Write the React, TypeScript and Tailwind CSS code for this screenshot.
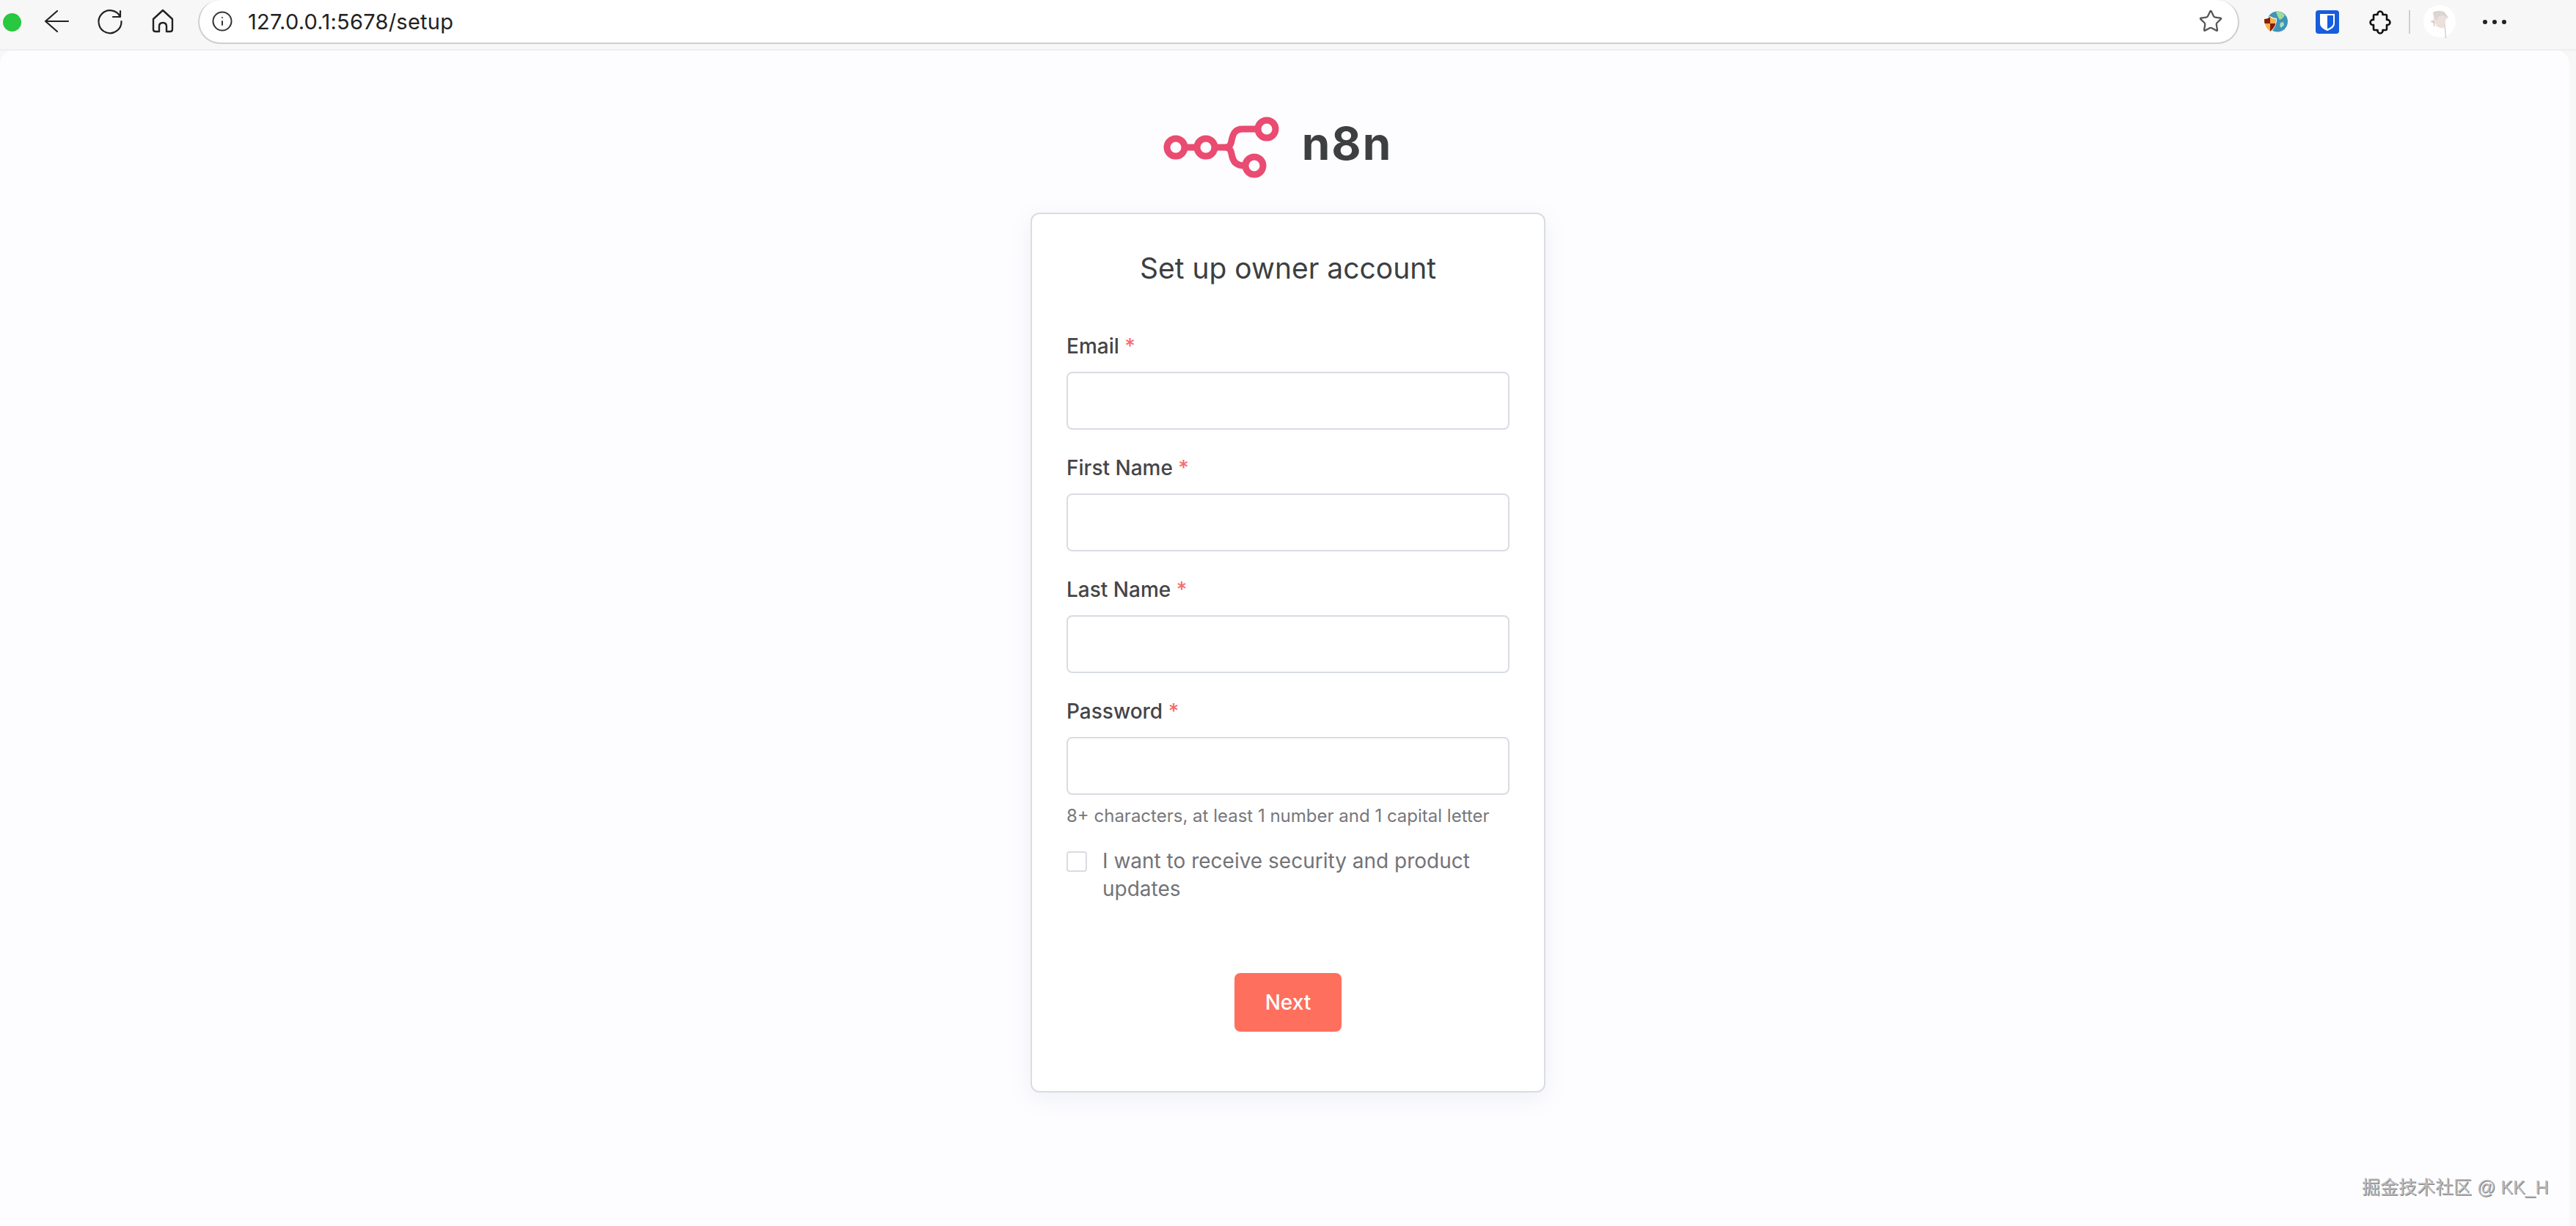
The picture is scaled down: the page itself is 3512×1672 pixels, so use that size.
import React from 'react';
import { Info, Star } from 'lucide-react';

const fields = [
  { label: 'Email' },
  { label: 'First Name' },
  { label: 'Last Name' },
  { label: 'Password', hint: '8+ characters, at least 1 number and 1 capital letter' },
];

const BackIcon: React.FC = () => (
  <svg width="40" height="40" viewBox="0 0 40 40" fill="none" stroke="#222" strokeWidth="2.2" strokeLinecap="round" strokeLinejoin="round">
    <path d="M4 19H35M20 5L4 19L20 33" />
  </svg>
);

const ReloadIcon: React.FC = () => (
  <svg width="40" height="40" viewBox="0 0 40 40" fill="none" stroke="#222" strokeWidth="2.2" strokeLinecap="round" strokeLinejoin="round">
    <path d="M35.5 19A15.5 15.5 0 1 1 34 13M34 5V13H24" />
  </svg>
);

const HomeIcon: React.FC = () => (
  <svg width="36" height="40" viewBox="0 0 36 40" fill="none" stroke="#222" strokeWidth="2.4" strokeLinecap="round" strokeLinejoin="round">
    <path d="M18 4L5 16V30c0 2 1 3 3 3h5V26c0-3 2-5 5-5s5 2 5 5v7h5c2 0 3-1 3-3V16z" />
  </svg>
);

const ShieldGlobe: React.FC = () => (
  <svg width="34" height="34" viewBox="0 0 34 34">
    <circle cx="20" cy="16.5" r="14" fill="#3f94b8" />
    <path d="M18 3c5-1 9 1 12 5-2 3-4 5-7 6-2-3-4-7-5-11z" fill="#9fdc97" />
    <path d="M24 18l4-1 1 4-4 4-2-3z" fill="#a5dfc0" />
    <path d="M1 12c3 0 6-1 9-3 3 2 6 3 9 3 0 8-3 15-9 19C4 27 1 20 1 12z" fill="#fff" />
    <path d="M2 13c3 0 6-1 8-3 2 2 5 3 8 3 0 7-3 13-8 17C5 26 2 20 2 13z" fill="#f4b247" />
    <path d="M10 10c-2 2-5 3-8 3 0 2 0 4 .5 6H10z" fill="#8a1c0c" />
    <path d="M10 19h7.5c-1 4-4 8-7.5 11z" fill="#8a1c0c" />
  </svg>
);

const Bitwarden: React.FC = () => (
  <svg width="32" height="32" viewBox="0 0 32 32">
    <rect width="32" height="32" rx="4" fill="#175ddc" />
    <path d="M6 5h20v13c0 5-5 8-10 10-5-2-10-5-10-10z" fill="#fff" />
    <path d="M16 7h8v11c0 3-4 6-8 7.500z" fill="#175ddc" />
  </svg>
);

const Puzzle: React.FC = () => (
  <svg width="30" height="34" viewBox="0 0 30 34" fill="none" stroke="#111" strokeWidth="2.6" strokeLinejoin="round">
    <path d="M7.500 7H11.500a3.600 3.600 0 1 1 7 0H22.500q1.500 0 1.500 1.500V14a3.600 3.600 0 1 1 0 7V26.500q0 1.500-1.500 1.500H18.500a3.600 3.600 0 1 1-7 0H7.500q-1.500 0-1.500-1.500V21a3.600 3.600 0 1 1 0-7V8.500q0-1.500 1.500-1.500z" />
  </svg>
);

const Avatar: React.FC = () => (
  <svg width="46" height="52" viewBox="0 0 46 52">
    <circle cx="23" cy="25" r="22" fill="#fff" />
    <path d="M14 13c5-3 12-3 16 0l5 7-4 3 0 7-4 5-8-3-2-4-5-2 3-5z" fill="#ecdfdc" />
    <path d="M14 13c5-3 12-3 16 0l5 7-9-3-5 2-2 5-3-5z" fill="#dad5d1" />
    <path d="M11 25l4 1 1 6" fill="none" stroke="#cdaeaa" strokeWidth="1" />
    <path d="M30 30l1.500 18" fill="none" stroke="#cfc6c6" strokeWidth="1.200" />
  </svg>
);

const Logo: React.FC = () => (
  <svg width="160" height="90" viewBox="0 0 160 90" fill="none" stroke="#ea4b71" strokeWidth="9">
    <circle cx="17" cy="46" r="12" />
    <circle cx="58" cy="46" r="12" />
    <circle cx="141" cy="21" r="12" />
    <circle cx="124" cy="71" r="12" />
    <path d="M29 46h17M70 46h14c6 0 8-3 9-9 2-10 5-16 15-16h21M84 46c6 0 8 3 9 9 2 10 5 16 19 16" />
  </svg>
);

const App: React.FC = () => {
  return (
    <div className="relative flex h-[1672px] w-full flex-col overflow-hidden bg-[#f7f7f7] font-['Inter',sans-serif]">
      {/* Browser toolbar */}
      <header className="flex h-[69px] shrink-0 items-start border-b-2 border-[#eeeeee]">
        <div className="flex h-[60px] items-center">
          <span className="ml-[4px] h-[25px] w-[25px] rounded-full bg-[#28c840]" />
          <span className="ml-[29px]"><BackIcon /></span>
          <span className="ml-[32px]"><ReloadIcon /></span>
          <span className="ml-[34px]"><HomeIcon /></span>
        </div>
        <div className="ml-[30px] flex h-[60px] w-[2783px] items-center rounded-[32px] border-b-2 border-l-2 border-r-2 border-[#cfcfcf] bg-white pl-[16px] pr-[20px]">
          <Info size={30} strokeWidth={1.6} className="text-[#333]" />
          <span className="ml-[20px] text-[29px] leading-none tracking-[0.25px] text-[#222]">127.0.0.1:5678/setup</span>
          <Star size={34} strokeWidth={1.6} className="ml-auto text-[#555]" />
        </div>
        <div className="flex h-[60px] items-center">
          <span className="ml-[32px]"><ShieldGlobe /></span>
          <span className="ml-[38px]"><Bitwarden /></span>
          <span className="ml-[41px]"><Puzzle /></span>
          <span className="ml-[24px] h-[32px] w-[2px] bg-[#cfcfcf]" />
          <span className="ml-[17px]"><Avatar /></span>
          <span className="ml-[36px] flex gap-[7px]">
            <i className="h-[6px] w-[6px] rounded-full bg-[#222]" />
            <i className="h-[6px] w-[6px] rounded-full bg-[#222]" />
            <i className="h-[6px] w-[6px] rounded-full bg-[#222]" />
          </span>
        </div>
      </header>

      {/* Page */}
      <main className="mr-[9px] flex flex-1 flex-col items-center rounded-t-[18px] bg-[#fdfdff] pl-[9px]">
        <div className="mr-[28px] mt-[86px] flex h-[90px] items-center">
          <Logo />
          <span className="ml-[29px] -mt-[8px] text-[62px] font-bold leading-none tracking-[2px] text-[#3d3f41]">n8n</span>
        </div>

        <div className="mt-[45px] flex h-[1200px] w-[702px] flex-col rounded-[12px] border-2 border-[#d9dce3] bg-white px-[47px] shadow-[0_8px_30px_rgba(120,130,170,0.1)]">
          <h1 className="mt-[50px] text-center text-[39px] font-normal leading-[48px] text-[#3d3f41]">Set up owner account</h1>

          <div className="mt-[60px] flex flex-col gap-[30px]">
            {fields.map((f) => (
              <div key={f.label}>
                <label className="block h-[57px] text-[28px] font-medium leading-[44px] text-[#444548]">
                  {f.label} <span className="text-[#f56c6c]">*</span>
                </label>
                <div className="h-[79px] w-full rounded-[8px] border-2 border-[#d9dce3] bg-white" />
                {f.hint && <p className="mt-[13px] text-[24px] leading-[32px] text-[#77777c]">{f.hint}</p>}
              </div>
            ))}
          </div>

          <div className="mt-[32px] flex items-start">
            <span className="h-[28px] w-[28px] shrink-0 rounded-[4px] border-2 border-[#d9dce3] bg-white" />
            <p className="ml-[21px] -mt-[6px] text-[28px] leading-[38px] text-[#737378]">I want to receive security and product updates</p>
          </div>

          <button className="mx-auto mt-[96px] h-[80px] w-[146px] rounded-[8px] bg-[#ff6f5e] text-[28px] font-medium text-white">Next</button>
        </div>
      </main>

      <span className="absolute left-[3220px] top-[1604px] font-['Liberation_Sans','Noto_Sans_CJK_SC',sans-serif] text-[25px] leading-[30px] text-[#bbbbbb] [text-shadow:1px_1px_0_#808080]">掘金技术社区 @ KK_H</span>
    </div>
  );
};

export default App;
